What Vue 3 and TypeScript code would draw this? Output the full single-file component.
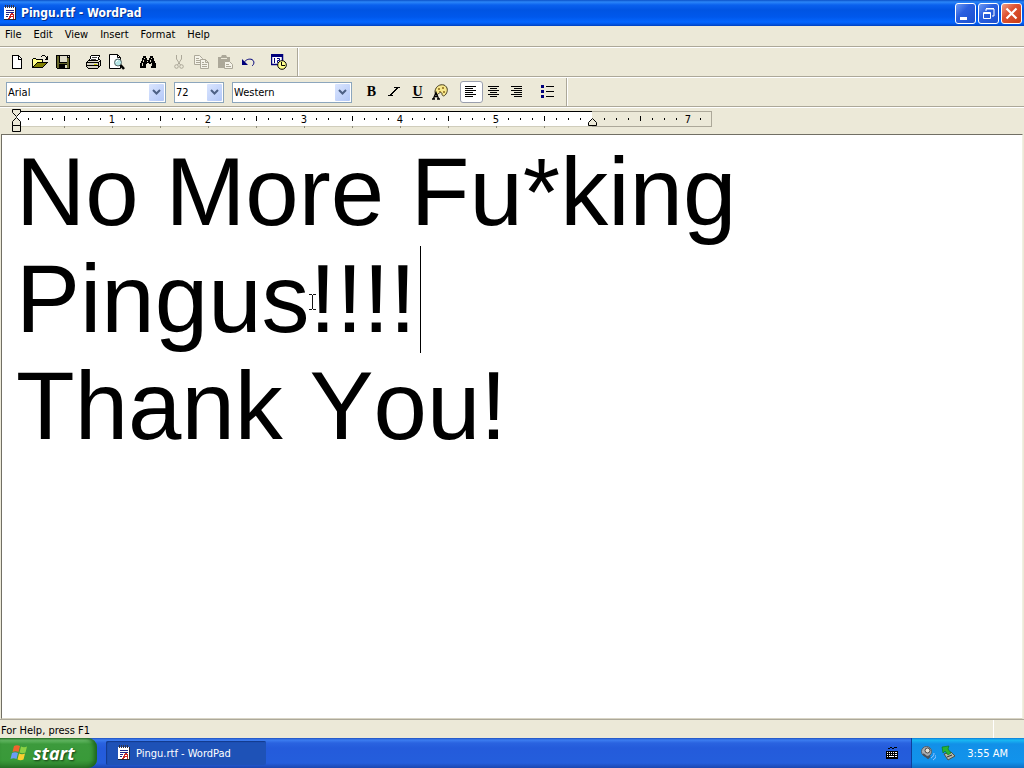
<script setup lang="ts">
import { ref } from 'vue'

const menus: string[] = ['File', 'Edit', 'View', 'Insert', 'Format', 'Help']
const body = ref<string>('No More Fu*king\nPingus!!!!\nThank You!')
const font = ref<string>('Arial')
const size = ref<string>('72')
const script = ref<string>('Western')

const inch = 96
const start = 16
interface Mark { x: number; kind: 'dot' | 'tick' | 'num'; label: number }
const marks: Mark[] = []
for (let i = 1; i <= 57; i++) {
  marks.push({ x: start + (i * inch) / 8, kind: i % 8 === 0 ? 'num' : i % 4 === 0 ? 'tick' : 'dot', label: i / 8 })
}
const tabs: number[] = Array.from({ length: 11 }, (_, i) => start + (i + 1) * 48)
</script>

<template>
  <div class="desktop">
    <header class="title">
      <svg class="doc" width="16" height="16" viewBox="0 0 16 16" shape-rendering="crispEdges">
        <path d="M2 2h12v13H2z" fill="#223" /><path d="M2 2h11v12H2z" fill="#fff" />
        <path d="M3 0h1v3H3zM5 0h1v3H5zM7 0h1v3H7zM9 0h1v3H9zM11 0h1v3h-1z" fill="#334" />
        <path d="M4 5h8v1H4zM4 7h8v1H4zM4 9h3v1H4zM4 11h2v1H4z" fill="#228" />
        <path d="M9 8h2v1h1v5h-1v-2H9v1H8v1H6v-1h1v-2h1V9h1zM9 10v1h2v-1z" fill="#c22" />
      </svg>
      <h1>Pingu.rtf - WordPad</h1>
      <button class="win" aria-label="Minimize"><svg width="21" height="21"><path d="M5 14h7v3H5z" fill="#fff" /></svg></button>
      <button class="win" aria-label="Restore"><svg width="21" height="21"><path d="M8 8V6h8v7h-2M8 5.500h8M5.500 9.500h7v6h-7zM5 10.500h8" fill="none" stroke="#fff" /></svg></button>
      <button class="win close" aria-label="Close"><svg width="21" height="21"><path d="M5.500 5.500l10 10M15.500 5.500l-10 10" stroke="#fff" stroke-width="2.200" /></svg></button>
    </header>

    <nav class="menu"><button v-for="m in menus" :key="m">{{ m }}</button></nav>

    <div class="bar">
      <div class="band">
        <button aria-label="New"><svg width="16" height="16" shape-rendering="crispEdges"><path d="M3 1h7v1h1v1h1v1h1v11H3z" fill="#000" /><path d="M4 2h5v4h3v8H4z" fill="#fff" /><path d="M10 3h1v1h1v1h-2z" fill="#fff" /></svg></button>
        <button aria-label="Open"><svg width="16" height="16" shape-rendering="crispEdges"><path d="M0 5h1V4h3v1h7v3h5v1h-1v1h-1v1h-1v1h-1v1h-1v1H0z" fill="#000" /><path d="M1 5h3v1h6v2H5v1H4v1H3v1H2v1H1z" fill="#ff8" /><path d="M5 9h9v1h-1v1h-1v1h-1v1H2v-1h1v-1h1v-1h1z" fill="#808000" /><path d="M9 2h1v1H9zM10 1h3v1h-3zM13 2h1v1h-1zM14 3h1V2h1v4h-3V5h1z" fill="#000" /></svg></button>
        <button aria-label="Save"><svg width="16" height="16" shape-rendering="crispEdges"><path d="M1 1h14v14H2v-1H1z" fill="#000" /><path d="M2 2h2v7h8V4h2v10h-2v-4H4v4H2z" fill="#66662a" /><path d="M5 2h7v6H5zM10 11h2v3h-2zM13 2h1v1h-1z" fill="#dedbc8" /></svg></button>
        <i class="gap" />
        <button aria-label="Print"><svg width="16" height="16" shape-rendering="crispEdges"><path d="M5 1h9v1H5zM4 2h1v3H4zM13 2h1v1h-1zM12 3h1v3h-1zM3 5h1v1H3zM2 6h10v1H2zM13 5h1v1h-1zM14 6h1v6h-1zM1 7h1v1H1zM0 8h13v1H0zM0 9h1v4H0zM12 9h1v5h-1zM13 7h1v1h-1zM1 11h12v1H1zM13 12h1v1h-1zM1 13h1v1H1zM2 14h10v1H2z" fill="#000" /><path d="M5 2h8v1h-1v3H4V5h1z" fill="#fff" /><path d="M6 3h5v1H6zM5 5h5v1H5z" fill="#444" /><path d="M2 7h11v1H2zM1 9h11v2H1zM1 12h11v1H1zM2 13h10v1H2zM13 9h1v3h-1z" fill="#d5d2c4" /><path d="M8 10h3v1H8z" fill="#cc0" /></svg></button>
        <button aria-label="Print Preview"><svg width="16" height="16"><path d="M.5.500h8l3 3v11H.5z" fill="#fff" stroke="#000" /><path d="M8.500.500v3h3" fill="none" stroke="#000" /><circle cx="9" cy="8.500" r="3.500" fill="#b5e5e5" stroke="#566" /><path d="M7 8l2-2" stroke="#fff" /><path d="M11.500 11l3.500 4" stroke="#000" stroke-width="2.500" /></svg></button>
        <i class="gap" />
        <button aria-label="Find"><svg width="16" height="16" shape-rendering="crispEdges"><path d="M3 2h3v2h1v2h2V4h1V2h3v2h1v3h1v2h1v5h-5v-4H9v-1H7v1H6v4H0V9h1V7h1V4h1z" fill="#000" /><path d="M4 4h1v1H4zM3 6h1v2H3zM2 9h1v3H2zM11 4h1v1h-1zM10 6h1v2h-1zM11 9h1v3h-1zM7 7h1v1H7z" fill="#dedbc8" /></svg></button>
        <i class="gap" />
        <button disabled aria-label="Cut"><svg width="16" height="16" fill="none" stroke="#aca899"><path d="M5.500 1v4l4 6M10.500 1v4l-4 6" /><circle cx="5.500" cy="12.500" r="1.800" /><circle cx="10.500" cy="12.500" r="1.800" /></svg></button>
        <button disabled aria-label="Copy"><svg width="16" height="16" fill="#f5f3e9" stroke="#aca899"><path d="M.5 1.500h5l3 3v6h-8zM2 4.500h3M2 6.500h4M2 8.500h4" /><path d="M6.500 5.500h5l3 3v6h-8zM11.500 5.500v3h3M8 8.500h2M8 10.500h5M8 12.500h5" /></svg></button>
        <button disabled aria-label="Paste"><svg width="16" height="16"><path d="M1 3h3l1-2h4l1 2h3v11H1z" fill="#aca899" /><path d="M4 4.500h6" stroke="#ece9d8" /><path d="M7.500 7.500h5l3 3v4h-8zM9 10.500h3M9 12.500h5" fill="#f5f3e9" stroke="#aca899" /></svg></button>
        <button aria-label="Undo"><svg width="16" height="16"><path d="M2 5v6h6z" fill="#00007b" /><path d="M4 8.500c2-3 5-4 8-3 3 2 2 5 0 6.500" fill="none" stroke="#00007b" /></svg></button>
        <i class="gap" />
        <button aria-label="Date/Time"><svg width="16" height="16"><path d="M.5.500h11v10H.5z" fill="#fff" stroke="#00007b" stroke-width="1.500" /><path d="M0 0h12v3H0z" fill="#00007b" /><path d="M3.500 4v5M6 4.500h2.500V6.500h-2v2H9" stroke="#00007b" fill="none" /><circle cx="11" cy="11" r="4.300" fill="#ffff8c" stroke="#000" /><path d="M10.500 8v3.500H14" fill="none" stroke="#000" /></svg></button>
      </div>
    </div>

    <div class="bar">
      <div class="band format">
        <label class="combo family"><select v-model="font" aria-label="Font"><option>Arial</option></select><span><svg width="9" height="7"><path d="M1 1l3.500 3.500L8 1" /></svg></span></label>
        <label class="combo size"><select v-model="size" aria-label="Font size"><option>72</option></select><span><svg width="9" height="7"><path d="M1 1l3.500 3.500L8 1" /></svg></span></label>
        <label class="combo script"><select v-model="script" aria-label="Font script"><option>Western</option></select><span><svg width="9" height="7"><path d="M1 1l3.500 3.500L8 1" /></svg></span></label>
        <button class="glyph" aria-label="Bold"><b>B</b></button>
        <button aria-label="Italic"><svg width="16" height="16" shape-rendering="crispEdges"><path d="M8 3h6v1h-2v1h-1v1h-1v1H9v1H8v1H7v1H6v1h1v1H2v-1h2v-1h1V9h1V8h1V7h1V6h1V5h1V4H8z" /></svg></button>
        <button class="glyph" aria-label="Underline"><u>U</u></button>
        <button aria-label="Color"><svg width="16" height="16"><path d="M3 7C4 2 8 0 12 1c4 2 4 6 2 9-2 3-4 2-4 0s-2-2-4 0-3 0-3-3z" fill="#f7e78c" stroke="#443c20" /><path d="M6 4h2v2H6zM10 3h2v2h-2zM11 7h2v2h-2zM7 7h2v1H7z" fill="#a68835" /><path d="M0 15h3M5 15h3M1.500 14.500l2.500-6 2.500 6M2.500 12.500h3" fill="none" stroke="#000" stroke-width="1.300" /></svg></button>
        <i class="gap" />
        <button class="pressed" aria-label="Align Left"><svg width="16" height="16" shape-rendering="crispEdges"><path d="M2 2h11v1H2zM2 4h8v1H2zM2 6h11v1H2zM2 8h8v1H2zM2 10h11v1H2zM2 12h8v1H2z" /></svg></button>
        <button aria-label="Center"><svg width="16" height="16" shape-rendering="crispEdges"><path d="M2 2h11v1H2zM4 4h7v1H4zM2 6h11v1H2zM4 8h7v1H4zM2 10h11v1H2zM4 12h7v1H4z" /></svg></button>
        <button aria-label="Align Right"><svg width="16" height="16" shape-rendering="crispEdges"><path d="M2 2h11v1H2zM5 4h8v1H5zM2 6h11v1H2zM5 8h8v1H5zM2 10h11v1H2zM5 12h8v1H5z" /></svg></button>
        <i class="gap" />
        <button aria-label="Bullets"><svg width="16" height="16" shape-rendering="crispEdges"><path d="M1 1h3v3H1zM1 6h3v3H1zM1 11h3v3H1z" fill="#00007b" /><path d="M6 2h8v1H6zM6 7h8v1H6zM6 12h8v1H6z" /></svg></button>
      </div>
    </div>

    <div class="ruler">
      <svg width="720" height="26" shape-rendering="crispEdges">
        <path d="M592 3h120v16H592z" fill="#aca899" /><path d="M592 4h119v14H592z" fill="#ece9d8" />
        <path d="M16 3h576v16H16z" fill="#fff" /><path d="M16 3h576v1H16z" fill="#000" /><path d="M16 18h576v1H16z" fill="#d0cdbc" />
        <template v-for="m in marks" :key="m.x">
          <text v-if="m.kind === 'num' && m.label !== 6" :x="m.x" y="15" text-anchor="middle">{{ m.label }}</text>
          <rect v-else-if="m.kind === 'tick'" :x="m.x" y="8" width="1" height="5" />
          <rect v-else-if="m.kind === 'dot'" :x="m.x" y="10" width="1" height="2" />
        </template>
        <rect v-for="t in tabs" :key="t" :x="t" y="18" width="1" height="2" fill="#918e7e" />
        <g fill="#ece9d8" stroke="#000" shape-rendering="auto">
          <path d="M12.500 1.500h8v3l-4 4-4-4zM12.500 17.500v-4l4-4 4 4v4zM12.500 17.500h8v6h-8z" />
          <path d="M588.500 17.500v-3l4-4 4 4v3z" />
        </g>
      </svg>
    </div>

    <main class="editor">
      <textarea v-model="body" aria-label="Document" spellcheck="false" />
      <i class="caret" />
      <svg class="pointer" width="9" height="17" shape-rendering="crispEdges"><path d="M1 0h3v1H1zM5 0h3v1H5zM4 1h1v14H4zM1 15h3v1H1zM5 15h3v1H5z" fill="#111" /></svg>
    </main>

    <footer class="status"><span>For Help, press F1</span><i /></footer>

    <div class="taskbar">
      <button class="start">
        <svg width="20" height="20" viewBox="0 0 20 20"><path d="M4 3c2-1 4-1 6 0L8.500 9c-2-1-4-1-6 0z" fill="#f0642d" /><path d="M11 3.500c2 1 4 1 6 0l-1.500 6c-2 1-4 1-6 0z" fill="#8bd144" /><path d="M2 10c2-1 4-1 6 0l-1.500 6c-2-1-4-1-6 0z" fill="#6b9cf5" /><path d="M9 10.500c2 1 4 1 6 0l-1.500 6c-2 1-4 1-6 0z" fill="#fbd030" /></svg>
        <span>start</span>
      </button>
      <button class="task">
        <svg width="16" height="16" viewBox="0 0 16 16" shape-rendering="crispEdges">
          <path d="M2 2h12v13H2z" fill="#223" /><path d="M2 2h11v12H2z" fill="#fff" />
          <path d="M3 0h1v3H3zM5 0h1v3H5zM7 0h1v3H7zM9 0h1v3H9zM11 0h1v3h-1z" fill="#334" />
          <path d="M4 5h8v1H4zM4 7h8v1H4zM4 9h3v1H4zM4 11h2v1H4z" fill="#228" />
          <path d="M9 8h2v1h1v5h-1v-2H9v1H8v1H6v-1h1v-2h1V9h1zM9 10v1h2v-1z" fill="#c22" />
        </svg>
        <span>Pingu.rtf - WordPad</span>
      </button>
      <svg class="keys" width="14" height="14" shape-rendering="crispEdges"><path d="M3 2h2V1h2v1h2V1h3v1H9v1H7V2H5v1H3zM1 5h12v8H1z" fill="#000" /><path d="M2 6h1v1H2zM4 6h1v1H4zM6 6h1v1H6zM8 6h1v1H8zM10 6h2v1h-2zM2 8h1v1H2zM4 8h1v1H4zM6 8h1v1H6zM8 8h1v1H8zM10 8h2v1h-2zM2 10h1v1H2zM4 10h5v1H4zM10 10h2v1h-2z" fill="#fff" /></svg>
      <div class="tray">
        <svg width="16" height="16"><circle cx="6.500" cy="6.500" r="5" fill="#a8aeb2" stroke="#555d66" /><circle cx="7.500" cy="5.500" r="2.500" fill="#e5e3d8" stroke="#444" /><path d="M3 9l5 4 2-2" fill="none" stroke="#48525c" stroke-width="2" /><path d="M11 13c2-1 3-3 3-5M13 15c2-1 3-3 3-5" fill="none" stroke="#9cc4ff" /></svg>
        <svg width="16" height="16"><path d="M4 9l7-2 4 4-7 4z" fill="#b5b9ae" stroke="#4a5248" /><path d="M7 12l5-2" stroke="#333" /><path d="M2 2l7-1-1 3 3 4-3 2-3-4-2 2z" fill="#28b432" stroke="#0a7418" stroke-width=".6" /></svg>
        <time>3:55 AM</time>
      </div>
    </div>
  </div>
</template>

<style>
html, body { margin: 0; height: 100%; }
#app { height: 100%; }
</style>

<style scoped>
.desktop { display: flex; flex-direction: column; height: 100vh; min-height: 400px; overflow: hidden; background: #ece9d8; font-family: "DejaVu Sans Condensed", "DejaVu Sans", sans-serif; font-size: 11px; color: #000; }
button { padding: 0; border: 0; background: none; font: inherit; color: inherit; white-space: nowrap; }
svg { display: block; flex: none; }
.title { flex: none; display: flex; align-items: center; gap: 2px; height: 26px; box-sizing: border-box; padding: 0 2px; background: linear-gradient(#0b51c8 0, #2b86f8 2px, #0a61ee 5px, #0054e3 10px, #0058ec 17px, #0466ff 22px, #0258e8 24px, #0040bd 26px); }
.title h1 { flex: 1; margin: 0 0 0 1px; font-size: 12px; font-weight: bold; color: #fff; text-shadow: 1px 1px #06308c; white-space: nowrap; }
.win { width: 21px; height: 21px; box-sizing: border-box; border: 1px solid #fff; border-radius: 3px; background: linear-gradient(135deg, #6e9af4, #2a5fdf 40%, #1c50cf); }
.win svg { margin: -1px; }
.close { background: linear-gradient(135deg, #f0a088, #df5333 40%, #c63c15); }
.menu { flex: none; display: flex; gap: 1px; height: 21px; box-sizing: border-box; border-bottom: 1px solid #aca899; }
.menu button { padding: 0 6px 0 5px; height: 18px; line-height: 18px; }
.bar { flex: none; display: flex; height: 30px; border-top: 1px solid #fff; border-bottom: 1px solid #aca899; box-sizing: border-box; }
.band { display: flex; align-items: center; padding: 0 6px; border-right: 1px solid #aca899; box-shadow: 1px 0 #fff; }
.band button { width: 23px; height: 22px; box-sizing: border-box; display: flex; align-items: center; padding-left: 3px; }
.gap { width: 8px; flex: none; }
.combo { position: relative; display: flex; height: 21px; box-sizing: border-box; border: 1px solid #8ca6bd; background: #fff; margin-right: 8px; }
.combo select { appearance: none; flex: 1; min-width: 0; border: 0; padding: 0 0 0 1px; background: none; font: inherit; color: #000; }
.combo span { position: absolute; right: 1px; top: 1px; bottom: 1px; width: 15px; background: linear-gradient(135deg, #dae5fe, #b3c8f8); border-radius: 1px; display: flex; align-items: center; justify-content: center; pointer-events: none; }
.combo path { fill: none; stroke: #4d6185; stroke-width: 2; }
.family { width: 160px; }
.size { width: 50px; }
.script { width: 120px; }
.band .glyph { justify-content: center; padding: 0; font-family: "Liberation Serif", serif; font-size: 14px; font-weight: bold; }
.band .pressed { border: 1px solid #9a9fae; border-radius: 3px; background: #fff; padding-left: 2px; }
.ruler { flex: none; height: 27px; border-top: 1px solid #fff; box-sizing: border-box; }
.ruler text { font-size: 11px; }
.editor { position: relative; flex: 1; min-height: 0; display: flex; margin: 0 1px; border: 1px solid #716f64; border-right-color: #f1efe2; border-bottom-color: #d8d4c4; background: #fff; }
.editor textarea { flex: 1; border: 0; outline: 0; margin: 0; padding: 3px 14px; resize: none; overflow: hidden; background: #fff; color: #000; font-family: "Liberation Sans", Arial, sans-serif; font-size: 96px; line-height: 107px; font-kerning: none; }
.caret { position: absolute; left: 418px; top: 111px; width: 1px; height: 107px; background: #000; }
.pointer { position: absolute; left: 306px; top: 159px; }
.status { flex: none; display: flex; justify-content: space-between; height: 19px; line-height: 21px; padding-left: 1px; border-top: 1px solid #aca899; box-sizing: border-box; }
.status i { width: 30px; border-left: 1px solid #fff; }
.taskbar { flex: none; display: flex; align-items: center; height: 30px; background: linear-gradient(#1f50c0 0, #3c7df0 2px, #2a63e0 5px, #245bdb 10px, #245edc 25px, #1b46b0 30px); color: #fff; }
.start { align-self: stretch; width: 97px; display: flex; align-items: center; gap: 3px; padding-left: 10px; border-radius: 0 9px 9px 0; background: linear-gradient(#2f7a2f 0, #6bbf6b 2px, #3c9a3c 6px, #399a39 22px, #2b7a2b 30px); box-shadow: inset -3px 0 4px #1c641c; }
.start span { font-family: "Open Sans", sans-serif; font-size: 18px; font-weight: bold; font-style: italic; line-height: 24px; text-shadow: 1px 1px 2px #143c14; }
.task { display: flex; align-items: center; gap: 4px; width: 160px; height: 24px; margin-left: 9px; padding-left: 10px; border-radius: 2px; background: #1e52b7; box-shadow: inset 1px 1px 1px #123a8c; }
.keys { margin-left: auto; margin-right: 12px; }
.tray { align-self: stretch; display: flex; align-items: center; gap: 4px; padding: 0 16px 0 8px; border-left: 1px solid #0d3f9c; background: linear-gradient(#0c7ad8 0, #19b9f3 2px, #1290e8 6px, #1193ec 24px, #0d6fc4 30px); }
.tray time { margin-left: 7px; white-space: nowrap; }
</style>
